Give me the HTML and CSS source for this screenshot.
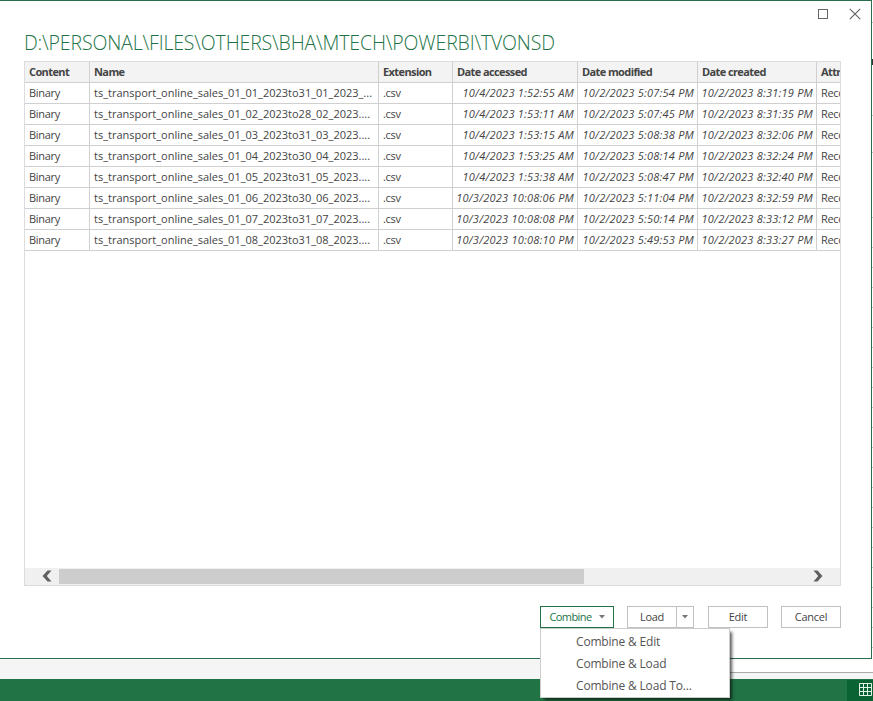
FILE: index.html
```
<!DOCTYPE html>
<html lang="en">
<head>
<meta charset="utf-8">
<title>Combine files</title>
<link rel="stylesheet" href="styles.css">
</head>
<body>
<div class="screen">
  <div class="upper">
    <main class="dialog">
      <div class="titlebar">
        <svg width="10" height="10" viewBox="0 0 10 10"><rect x=".5" y=".5" width="9" height="9" fill="none" stroke="#666"/></svg>
        <svg width="12" height="12" viewBox="0 0 12 12"><path d="M.8.8l10.4 10.4M11.2.8L.8 11.2" fill="none" stroke="#666" stroke-width="1.2"/></svg>
      </div>
      <h1 class="path"><span>D:\PERSONAL\FILES\OTHERS\BHA\MTECH\POWERBI\TVONSD</span></h1>
      <section class="panel">
        <div class="grid">
          <div class="row head"><b>Content</b><b>Name</b><b>Extension</b><b>Date accessed</b><b>Date modified</b><b>Date created</b><b>Attributes</b></div>
          <div class="row"><span>Binary</span><span class="name">ts_transport_online_sales_01_01_2023to31_01_2023_...</span><span>.csv</span><i>10/4/2023 1:52:55 AM</i><i>10/2/2023 5:07:54 PM</i><i>10/2/2023 8:31:19 PM</i><span>Record</span></div>
          <div class="row"><span>Binary</span><span class="name">ts_transport_online_sales_01_02_2023to28_02_2023....</span><span>.csv</span><i>10/4/2023 1:53:11 AM</i><i>10/2/2023 5:07:45 PM</i><i>10/2/2023 8:31:35 PM</i><span>Record</span></div>
          <div class="row"><span>Binary</span><span class="name">ts_transport_online_sales_01_03_2023to31_03_2023....</span><span>.csv</span><i>10/4/2023 1:53:15 AM</i><i>10/2/2023 5:08:38 PM</i><i>10/2/2023 8:32:06 PM</i><span>Record</span></div>
          <div class="row"><span>Binary</span><span class="name">ts_transport_online_sales_01_04_2023to30_04_2023....</span><span>.csv</span><i>10/4/2023 1:53:25 AM</i><i>10/2/2023 5:08:14 PM</i><i>10/2/2023 8:32:24 PM</i><span>Record</span></div>
          <div class="row"><span>Binary</span><span class="name">ts_transport_online_sales_01_05_2023to31_05_2023....</span><span>.csv</span><i>10/4/2023 1:53:38 AM</i><i>10/2/2023 5:08:47 PM</i><i>10/2/2023 8:32:40 PM</i><span>Record</span></div>
          <div class="row"><span>Binary</span><span class="name">ts_transport_online_sales_01_06_2023to30_06_2023....</span><span>.csv</span><i>10/3/2023 10:08:06 PM</i><i>10/2/2023 5:11:04 PM</i><i>10/2/2023 8:32:59 PM</i><span>Record</span></div>
          <div class="row"><span>Binary</span><span class="name">ts_transport_online_sales_01_07_2023to31_07_2023....</span><span>.csv</span><i>10/3/2023 10:08:08 PM</i><i>10/2/2023 5:50:14 PM</i><i>10/2/2023 8:33:12 PM</i><span>Record</span></div>
          <div class="row"><span>Binary</span><span class="name">ts_transport_online_sales_01_08_2023to31_08_2023....</span><span>.csv</span><i>10/3/2023 10:08:10 PM</i><i>10/2/2023 5:49:53 PM</i><i>10/2/2023 8:33:27 PM</i><span>Record</span></div>
        </div>
        <div class="scrollbar">
          <svg width="10" height="12" viewBox="0 0 10 12"><path d="M5.5.5h4L4.8 6l4.7 5.5h-4L.5 6z" fill="#606060"/></svg>
          <div class="track"><div class="thumb"></div></div>
          <svg width="10" height="12" viewBox="0 0 10 12"><path d="M4.5.5h-4L5.2 6 .5 11.5h4L9.5 6z" fill="#606060"/></svg>
        </div>
      </section>
      <div class="actions">
        <div class="combine">
          <button class="btn primary"><span>Combine</span><svg width="6" height="4"><path d="M0 0h6L3 3.5z" fill="#777"/></svg></button>
          <div class="menu"><div>Combine &amp; Edit</div><div>Combine &amp; Load</div><div class="last">Combine &amp; Load To...</div></div>
        </div>
        <div class="split"><button class="btn load">Load</button><button class="btn drop"><svg width="6" height="4"><path d="M0 0h6L3 3.5z" fill="#777"/></svg></button></div>
        <button class="btn edit">Edit</button>
        <button class="btn cancel">Cancel</button>
      </div>
    </main>
    <div class="sheet"><div class="mark"></div></div>
  </div>
  <div class="tabs"><div class="hscroll"></div></div>
  <footer class="status"><div class="view"><svg width="13" height="13" viewBox="0 0 13 13"><path d="M.5.5h12v12H.5zM.5 4.5h12M.5 8.5h12M4.5.5v12M8.5.5v12" fill="none" stroke="#e2f2e8"/></svg></div></footer>
</div>
</body>
</html>
```
FILE: styles.css
```
* { box-sizing: border-box; }
body {
  margin: 0;
  font-family: "Open Sans", "Noto Sans", sans-serif;
  font-size: 11px;
  color: #444;
}
svg { display: block; }
.screen { width: 873px; height: 701px; display: flex; flex-direction: column; overflow: hidden; background: #f5f5f5; }
.upper { display: flex; height: 659px; }
.dialog {
  width: 872px;
  background: #fff;
  border: solid #2b6b4e;
  border-width: 1px 1px 1px 0;
  padding-left: 24px;
  display: flex;
  flex-direction: column;
}
.sheet {
  flex: 1;
  padding-top: 59px;
  background:
    linear-gradient(transparent 22px, #c4c4c4 22px 23px, transparent 23px 115px, #c4c4c4 115px 116px, transparent 116px 152px, #c4c4c4 152px 153px, transparent 153px 217px, #c4c4c4 217px 218px, transparent 218px),
    linear-gradient(#fff 0 240px, transparent 240px),
    repeating-linear-gradient(#fff 0 7px, #c4c4c4 7px 8px, #fff 8px 20px);
}
.mark { height: 6px; background: #333; }
.titlebar { height: 27px; padding: 7px 10px 0 0; display: flex; justify-content: flex-end; gap: 21px; }
.titlebar svg:first-child { margin-top: 1px; }
.path {
  margin: 0;
  height: 33px;
  line-height: 29px;
  font-size: 19.5px;
  font-weight: 300;
  color: #217346;
  white-space: nowrap;
  letter-spacing: -0.15px;
}
.panel { width: 817px; height: 525px; border: 1px solid #dcdcdc; display: flex; flex-direction: column; }
.grid { flex: 1; overflow: hidden; }
.row {
  display: grid;
  grid-template-columns: 65px 289px 74px 125px 120px 119px 90px;
  height: 21px;
  width: 882px;
}
.row > * {
  border: solid #d0d0d0;
  border-width: 0 1px 1px 0;
  padding: 0 4px;
  line-height: 20px;
  white-space: nowrap;
  overflow: hidden;
  letter-spacing: -0.3px;
}
.row > .name { letter-spacing: 0; }
.row > i { text-align: right; padding-right: 3px; padding-left: 0; letter-spacing: 0.22px; }
.head { background: #f3f3f3; }
.head > b { font-weight: 700; letter-spacing: -0.6px; }
.scrollbar { height: 17px; background: #f0f0f0; display: flex; align-items: flex-start; padding: 1px 17px 0; }
.scrollbar > svg { margin-top: 1px; }
.track { flex: 1; margin: 0 0 0 7px; height: 15px; }
.thumb { width: 525px; height: 15px; background: #cdcdcd; }
.actions { display: flex; height: 22px; margin: 20px 30px 0 0; justify-content: flex-end; }
.btn {
  height: 22px;
  padding: 0 0 1px;
  border: 1px solid #c0c0c0;
  background: #fff;
  color: #444;
  font: inherit;
  letter-spacing: -0.25px;
  display: flex;
  align-items: center;
  justify-content: center;
}
.combine { position: relative; margin-right: 13px; }
.primary { width: 74px; border-color: #217346; color: #217346; gap: 8px; padding-left: 1px; letter-spacing: -0.6px; }
.split { display: flex; margin-right: 14px; }
.load { width: 50px; }
.drop { width: 18px; margin-left: -1px; }
.edit { width: 60px; margin-right: 13px; }
.cancel { width: 60px; }
.menu {
  position: absolute;
  left: 0;
  top: 22px;
  width: 190px;
  height: 70px;
  padding: 1px 0 0 35px;
  background: #fff;
  border: 1px solid #ccc;
  box-shadow: 3px 3px 3px -1px rgba(0, 0, 0, .65);
  font-size: 12px;
  letter-spacing: -0.18px;
  color: #555;
  z-index: 2;
}
.menu div { height: 22px; line-height: 23px; white-space: nowrap; }
.tabs { height: 20px; display: flex; justify-content: flex-end; border-top: 1px solid #fafafa; }
.hscroll { width: 320px; height: 13px; background: #fff; border-bottom: 1px solid #aaa; }
.status { height: 22px; background: #217346; display: flex; justify-content: flex-end; padding-top: 1px; }
.view { width: 26px; background: #0a6332; padding: 3px 0 0 12px; }
```
